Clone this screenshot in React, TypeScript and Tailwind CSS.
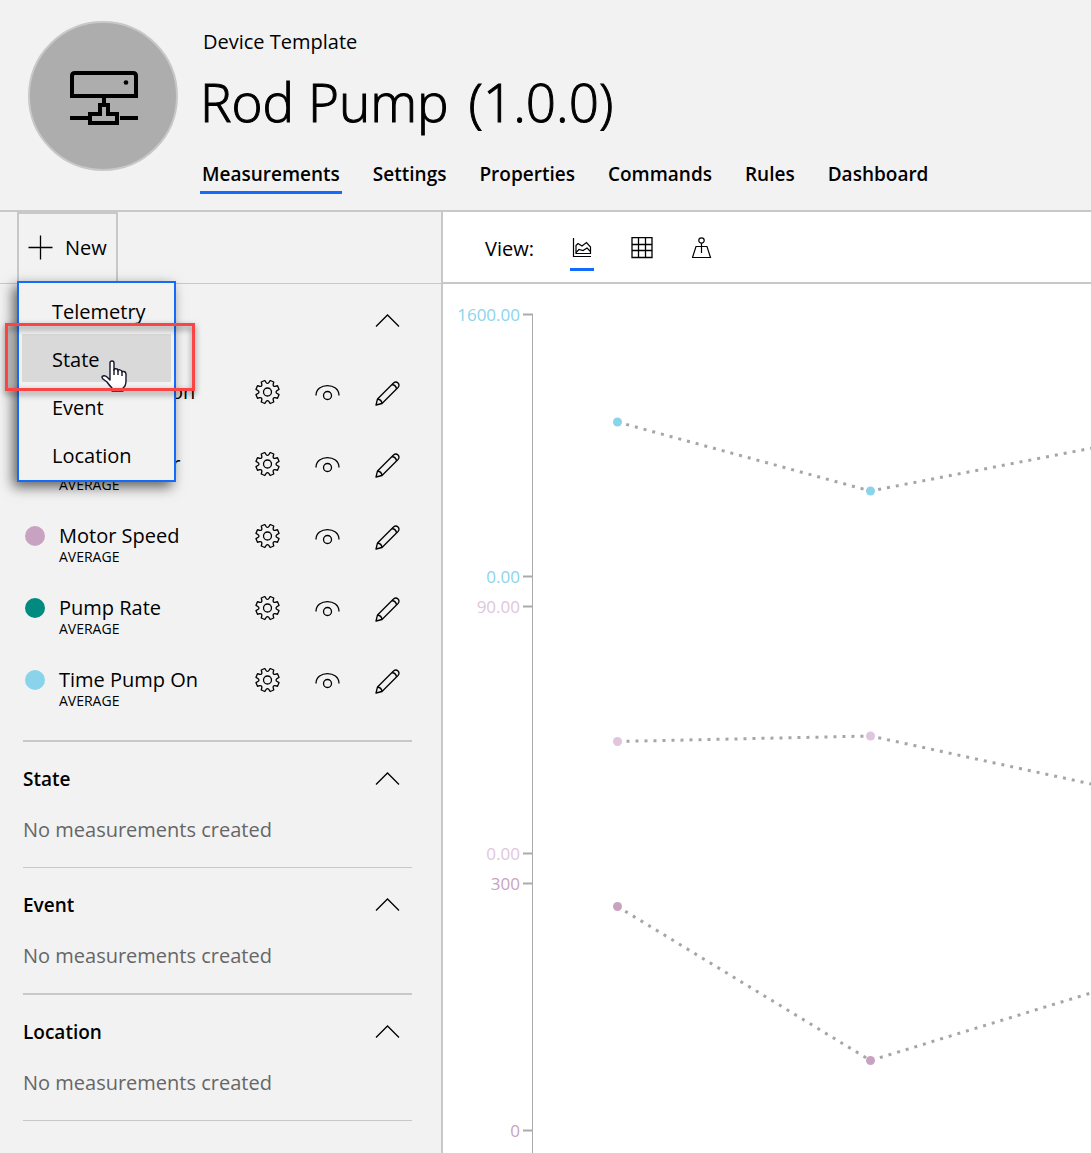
import React from "react";

const tabs = ["Measurements", "Settings", "Properties", "Commands", "Rules", "Dashboard"];

const measurements = [
  { name: "Casing Friction", color: "bg-[#e0c3dc]" },
  { name: "Motor Power", color: "bg-[#dfc5dd]" },
  { name: "Motor Speed", color: "bg-[#c8a3c1]" },
  { name: "Pump Rate", color: "bg-[#008a80]" },
  { name: "Time Pump On", color: "bg-[#8ad4eb]" },
];

const menuItems = ["Telemetry", "State", "Event", "Location"];

type Series = { color: string; points: [number, number][] };

const series: Series[] = [
  { color: "#8ad4eb", points: [[174.5, 138], [427.5, 207], [680.5, 158]] },
  { color: "#dfc5dd", points: [[174.5, 457.5], [427.5, 452], [680.5, 507]] },
  { color: "#c8a3c1", points: [[174.5, 622.5], [427.5, 776.5], [680.5, 699]] },
];

const ticks = [
  { label: "1600.00", y: 30.5, color: "#8ad4eb" },
  { label: "0.00", y: 292.5, color: "#8ad4eb" },
  { label: "90.00", y: 322.5, color: "#dfc5dd" },
  { label: "0.00", y: 569.5, color: "#dfc5dd" },
  { label: "300", y: 599.5, color: "#c8a3c1" },
  { label: "0", y: 846.5, color: "#c8a3c1" },
];

function DeviceIcon() {
  return (
    <svg width="68" height="54" viewBox="0 0 68 54" fill="none" stroke="#000" strokeWidth="4" aria-hidden="true">
      <path d="M2 25V5Q2 2 5 2H63Q66 2 66 5V25Z" />
      <circle cx="56" cy="11.5" r="2.3" fill="#000" stroke="none" />
      <path d="M34 27V33M0 47H18M50 47H68" />
      <path d="M30 34H38V43H47V52H20V43H30Z" />
    </svg>
  );
}

function GearIcon() {
  const teeth: string[] = [];
  for (let i = 0; i < 8; i++) {
    const at = (r: number, deg: number) => {
      const a = ((deg + i * 45) * Math.PI) / 180;
      return `${(12.5 + r * Math.cos(a)).toFixed(2)} ${(12 + r * Math.sin(a)).toFixed(2)}`;
    };
    teeth.push(`${i === 0 ? "M" : "L"}${at(11.8, 13)}L${at(11.8, 32)}L${at(9.4, 37)}Q${at(7.8, 45)} ${at(9.4, 53)}`);
  }
  return (
    <svg width="25" height="26" viewBox="0 0 25 26" fill="none" stroke="#000" strokeWidth="1.3" strokeLinejoin="round" aria-hidden="true">
      <path d={teeth.join("") + "Z"} />
      <circle cx="12.5" cy="12" r="4" />
    </svg>
  );
}

function EyeIcon() {
  return (
    <svg width="25" height="26" viewBox="0 0 25 26" fill="none" stroke="#000" strokeWidth="1.3" aria-hidden="true">
      <path d="M1 15.500C1 2.300 24 2.300 24 15.500" />
      <circle cx="12.5" cy="15.5" r="4" />
    </svg>
  );
}

function PencilIcon() {
  return (
    <svg width="25" height="26" viewBox="0 0 25 26" fill="none" stroke="#000" strokeWidth="1.3" strokeLinejoin="round" aria-hidden="true">
      <path d="M1 25L2.500 19L18.500 3Q21 1 23 3Q25 5.200 23 7.500L7 23.500ZM2.500 19Q6.500 19.500 7 23.500M17 4.500Q21 5 21.500 9" />
    </svg>
  );
}

function ChevronUp() {
  return (
    <svg width="25" height="14" viewBox="0 0 25 14" fill="none" stroke="#000" strokeWidth="1.3" aria-hidden="true">
      <path d="M1 12.500L12.500 1L24 12.500" />
    </svg>
  );
}

function ChartIcon() {
  return (
    <svg width="20" height="20" viewBox="0 0 20 20" fill="none" stroke="#000" strokeWidth="1.2" aria-hidden="true">
      <path d="M1.500 0V18.500H19" />
      <path d="M4 15.500V7.500L6 5.500L10 8L14.500 4.500L18.500 9V15.500Z" />
      <path d="M4 14.500L7 11.500L11 12.500L15 10L18.500 13.500" />
    </svg>
  );
}

function GridIcon() {
  return (
    <svg width="22" height="22" viewBox="0 0 22 22" fill="none" stroke="#000" strokeWidth="1.3" aria-hidden="true">
      <path d="M1 0.500H21V20.500H1ZM7.500 0.500V20.500M14.500 0.500V20.500M1 7.500H21M1 13.500H21" />
    </svg>
  );
}

function MapIcon() {
  return (
    <svg width="20" height="22" viewBox="0 0 20 22" fill="none" stroke="#000" strokeWidth="1.2" aria-hidden="true">
      <circle cx="9.500" cy="3.500" r="2.700" />
      <path d="M9.500 6.300V16M9.500 9.500H4L0.500 20.500H18.500L15 9.500H9.500" />
    </svg>
  );
}

function HandCursor() {
  return (
    <svg width="26" height="32" viewBox="0 0 26 32" fill="#fff" stroke="#15152a" strokeWidth="1.4" strokeLinejoin="round" aria-hidden="true">
      <path d="M9 20V3Q9 1 11 1Q13 1 13 3V10Q13 8.500 15 8.800Q17 9 17 11Q17 9.500 19 9.900Q21 10.200 21 12Q21 11 23 11.500Q25 12 25 14V21Q25 26 22 28V31H11V28Q8 25 6 22L2 19Q0 17 2 16Q4 15 6 17Z" />
      <path d="M13 9V15M17 11V15M21 12V16" fill="none" />
    </svg>
  );
}

function SectionHeader({ title }: { title: string }) {
  return (
    <div className="flex h-7 items-center justify-between pr-3">
      <h2 className="text-[19px] font-semibold">{title}</h2>
      <button type="button" aria-label={`Collapse ${title}`} className="flex">
        <ChevronUp />
      </button>
    </div>
  );
}

function EmptySection({ title, line }: { title: string; line: string }) {
  return (
    <section className={`${line} border-[#c8c8c8] py-[23px]`}>
      <SectionHeader title={title} />
      <p className="mt-[23px] text-[20px] leading-7 text-[#666]">No measurements created</p>
    </section>
  );
}

function NewMenu() {
  return (
    <div className="relative ml-[17px] h-full">
      <button type="button" aria-haspopup="menu" aria-expanded="true" className="flex h-full w-[101px] items-center gap-3 border-2 border-b-0 border-[#c8c8c8] pb-0.5 pl-[9px] text-[20px]">
        <svg width="25" height="25" viewBox="0 0 25 25" stroke="#000" strokeWidth="1.3" aria-hidden="true">
          <path d="M0.500 12.500H24.500M12.500 0.500V24.500" />
        </svg>
        New
      </button>
      <div role="menu" className="absolute top-[69px] left-0 z-10 w-[159px] border-2 border-[#136bfb] bg-[#f2f2f2] px-[3px] pt-[3px] pb-0.5 shadow-[-4px_5px_12px_rgba(0,0,0,0.6)]">
        {menuItems.map((item) => (
          <button
            key={item}
            type="button"
            role="menuitem"
            className={`flex h-12 w-full items-center pt-1 pl-[30px] text-[20px] ${item === "State" ? "bg-[#d9d9d9]" : ""}`}
          >
            {item}
          </button>
        ))}
      </div>
      <div className="pointer-events-none absolute top-[148px] left-[84px] z-20">
        <HandCursor />
      </div>
      <div className="pointer-events-none absolute top-[111px] -left-3 z-20 h-[68px] w-[190px] border-3 border-[#fb4444] drop-shadow-[0_3px_3px_rgba(0,0,0,0.5)]" />
    </div>
  );
}

function Sidebar() {
  return (
    <aside className="w-[443px] shrink-0 border-r-2 border-[#c8c8c8]">
      <div className="h-[72px] border-b border-[#c8c8c8]">
        <NewMenu />
      </div>
      <div className="pr-[29px] pl-[23px]">
        <section className="border-b-2 border-[#c8c8c8] pt-[23px] pb-[22px]">
          <SectionHeader title="Telemetry" />
          <ul className="mt-[23px]">
            {measurements.map((m) => (
              <li key={m.name} className="flex h-[72px] items-start pt-5 pr-3 pl-0.5">
                <span className={`mt-1 size-5 rounded-full ${m.color}`} />
                <div className="ml-3.5 flex-1">
                  <p className="text-[20px] leading-7">{m.name}</p>
                  <p className="text-[14px] leading-3.5">AVERAGE</p>
                </div>
                <div className="flex gap-[35px] pt-0.5">
                  <button type="button" aria-label={`${m.name} settings`}><GearIcon /></button>
                  <button type="button" aria-label={`${m.name} visibility`}><EyeIcon /></button>
                  <button type="button" aria-label={`Edit ${m.name}`}><PencilIcon /></button>
                </div>
              </li>
            ))}
          </ul>
        </section>
        <EmptySection title="State" line="border-b" />
        <EmptySection title="Event" line="border-b-2" />
        <EmptySection title="Location" line="border-b" />
      </div>
    </aside>
  );
}

function Chart() {
  return (
    <svg width="100%" height="869" role="img" aria-label="Measurements chart" className="block">
      <path d="M89.500 30V869" stroke="#ababab" strokeWidth="1" />
      {ticks.map((t) => (
        <g key={t.label + t.y}>
          <path d={`M80 ${t.y}H90`} stroke="#ababab" strokeWidth="2" />
          <text x="77" y={Math.round(t.y) + 6} textAnchor="end" fill={t.color} fontSize="17">
            {t.label}
          </text>
        </g>
      ))}
      {series.map((s) => (
        <g key={s.color}>
          <polyline
            points={s.points.map((p) => p.join(",")).join(" ")}
            fill="none"
            stroke="#a6a6a6"
            strokeWidth="3"
            strokeDasharray="3 6"
          />
          {s.points.map(([x, y]) => (
            <circle key={x} cx={x} cy={y} r="4.5" fill={s.color} />
          ))}
        </g>
      ))}
    </svg>
  );
}

export default function App() {
  return (
    <div className="flex min-h-screen flex-col bg-[#f2f2f2] font-['Open_Sans','Noto_Sans',sans-serif] text-black">
      <header className="flex h-[212px] items-start border-b-2 border-[#c8c8c8] pt-[21px] pl-7">
        <div className="flex size-[150px] shrink-0 items-center justify-center rounded-full border-2 border-[#c8c8c8] bg-[#adadad] pt-1 pl-0.5">
          <DeviceIcon />
        </div>
        <div className="ml-[22px]">
          <p className="pt-[7px] pl-[3px] text-[20px] leading-7">Device Template</p>
          <h1 className="flex gap-5 pt-3 text-[53px] leading-[68px] font-light [-webkit-text-stroke:1px_#000]">
            <span>Rod Pump</span>
            <span>(1.0.0)</span>
          </h1>
          <nav className="mt-6 flex gap-[29px]">
            {tabs.map((t) => (
              <a
                key={t}
                href="#"
                className={`px-0.5 pb-[3px] text-[19px] leading-7 font-semibold ${t === "Measurements" ? "border-b-3 border-[#136bfb]" : ""}`}
              >
                {t}
              </a>
            ))}
          </nav>
        </div>
      </header>
      <div className="flex flex-1">
        <Sidebar />
        <main className="min-w-0 flex-1 bg-white">
          <div className="flex h-[72px] items-start border-b-2 border-[#c8c8c8] pt-[22px] pl-[42px]">
            <span className="pt-px text-[20px] leading-7">View:</span>
            <div className="ml-9 flex gap-9">
              <button type="button" aria-label="Chart view" className="flex h-[37px] w-6 justify-center border-b-3 border-[#136bfb] pt-1">
                <ChartIcon />
              </button>
              <button type="button" aria-label="Table view" className="flex h-[37px] w-6 justify-center pt-[3px]">
                <GridIcon />
              </button>
              <button type="button" aria-label="Map view" className="flex h-[37px] w-6 justify-center pt-[3px]">
                <MapIcon />
              </button>
            </div>
          </div>
          <Chart />
        </main>
      </div>
    </div>
  );
}
